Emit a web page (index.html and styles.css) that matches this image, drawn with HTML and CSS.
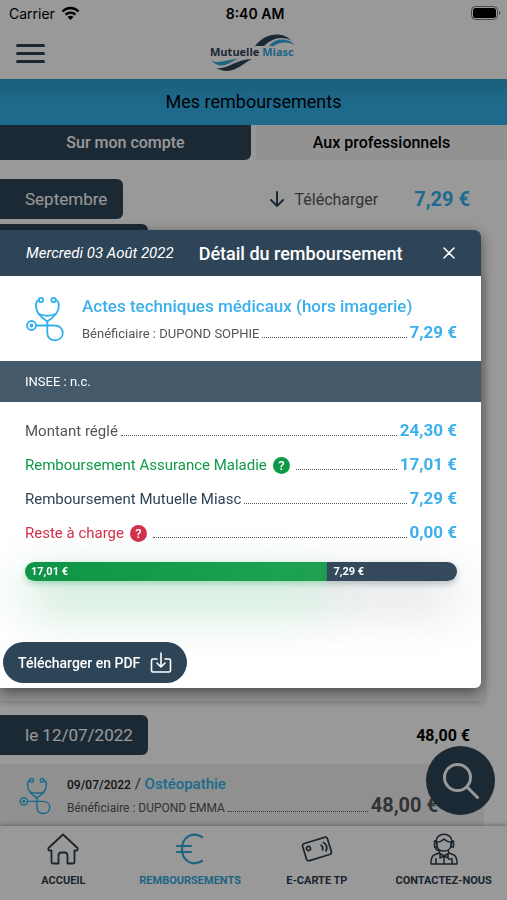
FILE: index.html
```html
<!DOCTYPE html>
<html lang="fr">
<head>
  <meta charset="UTF-8">
  <title>Mes remboursements</title>
  <meta name="viewport" content="width=device-width, initial-scale=1.0">
  <link rel="stylesheet" href="styles.css">
</head>
<body>
  <!-- shared stethoscope icon -->
  <svg class="sprite" aria-hidden="true">
    <symbol id="stethoscope" viewBox="0 0 38 46">
      <g fill="none" stroke="currentColor" stroke-width="1.8" stroke-linecap="round" stroke-linejoin="round">
        <circle cx="15" cy="4" r="2.200"/>
        <circle cx="27.500" cy="4" r="2.200"/>
        <path d="M12.800 4C10 5 10 7 10 9c0 8 4 11 11.300 16.500C28.500 20 32.800 17 32.800 9c0-2 0-4-3.100-5"/>
        <path d="M13 18c5 2 12 2 16.500 0M21.300 25.500V37c0 10 15.500 9.500 15.500 0 0-4.500-3.500-7.500-8-7.500H10"/>
        <circle cx="5.500" cy="29.500" r="4.500"/>
        <circle cx="5.500" cy="29.500" r="1"/>
      </g>
    </symbol>
  </svg>

  <div class="app">
    <div class="statusbar">
      <span class="carrier">Carrier
        <svg width="19" height="15" viewBox="0 0 19 15" fill="none" stroke="#000" stroke-width="2.400">
          <path d="M1.500 5.500c4.500-4.600 11.500-4.600 16 0M4.600 8.700c2.800-2.800 7-2.800 9.800 0"/>
          <path d="M9.500 14 6.500 11c1.700-1.600 4.300-1.600 6 0z" fill="#000" stroke="none"/>
        </svg>
      </span>
      <span class="clock">8:40 AM</span>
      <svg class="battery" width="30" height="15" viewBox="0 0 30 15">
        <rect x=".5" y=".5" width="26" height="13" rx="4" fill="none" stroke="#777"/>
        <rect x="2" y="2" width="23" height="10" rx="2.500" fill="#000"/>
        <path d="M28 5v4c2-1 2-3 0-4z" fill="#777"/>
      </svg>
    </div>

    <header class="header">
      <button class="menu-btn" type="button" aria-label="Menu">
        <span></span><span></span><span></span>
      </button>
      <svg class="logo" width="90" height="38" viewBox="0 0 90 38" role="img" aria-label="Mutuelle Miasc">
        <path d="M46 12C55 0 72-4 83 7 73 1 62 5 55 12z" fill="#2e4558"/>
        <path d="M60 12c5-7 17-10 26-1-9-4-16-3-21 1z" fill="#32a8dc"/>
        <text x="1" y="22"><tspan fill="#2e4558">Mutuelle</tspan><tspan fill="#32a8dc"> Miasc</tspan></text>
        <path d="M2 26c8 5 15-1 27-1-7 2-17 13-27 1z" fill="#32a8dc"/>
        <path d="M7 34c13 2 19-9 36-9-10 4-19 18-36 9z" fill="#2e4558"/>
      </svg>
    </header>

    <h1 class="page-title">Mes remboursements</h1>

    <div class="tabs">
      <button class="tab active" type="button">Sur mon compte</button>
      <button class="tab" type="button">Aux professionnels</button>
    </div>

    <main class="list">
      <div class="row">
        <span class="tag">Septembre</span>
        <a class="download" href="#">
          <svg width="16" height="18" viewBox="0 0 16 18" fill="none" stroke="#2e4558" stroke-width="2" stroke-linecap="round" stroke-linejoin="round"><path d="M8 2v14M2 10l6 6 6-6"/></svg>
          Télécharger
        </a>
        <span class="month-total">7,29 €</span>
      </div>
      <div class="group">
        <span class="tag tag-wide"></span>
        <div class="card card-fill"></div>
      </div>
      <div class="row row-day">
        <span class="tag tag-wide">le 12/07/2022</span>
        <span class="day-total">48,00 €</span>
      </div>
      <div class="card card-care">
        <svg class="care-icon" width="32" height="38"><use href="#stethoscope"/></svg>
        <div class="care">
          <div class="care-name"><b>09/07/2022</b> / <span>Ostéopathie</span></div>
          <div class="line line-tiny">
            <span>Bénéficiaire : DUPOND EMMA</span>
            <i class="dots"></i>
            <b class="care-total">48,00 €</b>
          </div>
        </div>
      </div>
    </main>

    <button class="search-btn" type="button" aria-label="Rechercher">
      <svg width="36" height="36" viewBox="0 0 36 36" fill="none" stroke="#fff" stroke-width="3" stroke-linecap="round"><circle cx="14.500" cy="14.500" r="13"/><path d="m24 24 10.500 10.500"/></svg>
    </button>

    <nav class="nav">
      <a href="#">
        <svg width="32" height="32" viewBox="0 0 32 32" fill="none" stroke="currentColor" stroke-width="1.800" stroke-linejoin="round"><path d="M16 1.500 1.500 15c-.7 2 .5 3 3 2.500V29c0 1 .5 1.500 1.500 1.500h5.500v-8c0-2 1-3 3-3h3c2 0 3 1 3 3v8H26c1 0 1.500-.5 1.500-1.500V17.500c2.500.5 3.700-.5 3-2.500z"/></svg>
        Accueil
      </a>
      <a class="current" href="#">
        <svg width="32" height="32" viewBox="0 0 32 32" fill="none" stroke="currentColor" stroke-width="2.200" stroke-linecap="round"><path d="M28 4C17-2 8 5 8 16s9 18 20 12M3 13h14M3 19h14"/></svg>
        Remboursements
      </a>
      <a href="#">
        <svg width="32" height="32" viewBox="0 0 32 32" fill="none" stroke="currentColor" stroke-width="1.700" stroke-linecap="round"><g transform="rotate(-17 16 16)"><rect x="3" y="7" width="26" height="18" rx="2.500"/><circle cx="8" cy="13" r="2"/><path d="M21 13.500q2 2.500 0 5M24 11.500q4 4.500 0 9"/></g></svg>
        E-Carte TP
      </a>
      <a href="#">
        <svg width="32" height="32" viewBox="0 0 32 32" fill="none" stroke="currentColor" stroke-width="1.500" stroke-linejoin="round"><path d="M8 9C8-1.500 24-1.500 24 9M9 9c4 0 6-2 7-3 1 1 3 3 7 3v3c0 8-14 8-14 0zM8 8H6.500v6H9zM24 8h1.500v6H23zM7 14c1 3 3 4 6 4M12 17l-1 3-5 2c-2 1-3 3-3 9h26c0-6-1-8-3-9l-5-2-1-3M11 20l5 3 5-3M12 20v5l4-2 4 2v-5M16 23v8M8 25v6M24 25v6M20 26h3"/></svg>
        Contactez-nous
      </a>
    </nav>
  </div>

  <div class="overlay">
    <section class="modal" role="dialog" aria-labelledby="modal-title">
      <header class="modal-header">
        <em>Mercredi 03 Août 2022</em>
        <h2 id="modal-title">Détail du remboursement</h2>
        <button class="close-btn" type="button" aria-label="Fermer">
          <svg width="12" height="12" viewBox="0 0 12 12" stroke="#fff" stroke-width="1.500" stroke-linecap="round"><path d="m1 1 10 10M11 1 1 11"/></svg>
        </button>
      </header>

      <div class="act">
        <svg class="act-icon" width="38" height="46"><use href="#stethoscope"/></svg>
        <div class="care">
          <h3>Actes techniques médicaux (hors imagerie)</h3>
          <div class="line line-small">
            <span>Bénéficiaire : DUPOND SOPHIE</span>
            <i class="dots"></i>
            <b>7,29 €</b>
          </div>
        </div>
      </div>

      <div class="insee">INSEE : n.c.</div>

      <div class="details">
        <div class="line">
          <span>Montant réglé</span><i class="dots"></i><b>24,30 €</b>
        </div>
        <div class="line green">
          <span>Remboursement Assurance Maladie</span>
          <button class="help" type="button">?</button>
          <i class="dots"></i><b>17,01 €</b>
        </div>
        <div class="line navy">
          <span>Remboursement Mutuelle Miasc</span><i class="dots"></i><b>7,29 €</b>
        </div>
        <div class="line red">
          <span>Reste à charge</span>
          <button class="help" type="button">?</button>
          <i class="dots"></i><b>0,00 €</b>
        </div>

        <div class="bar">
          <span class="bar-secu" style="width: 70%">17,01 €</span>
          <span class="bar-mutuelle" style="width: 30%">7,29 €</span>
        </div>
      </div>

      <button class="pdf-btn" type="button">
        Télécharger en PDF
        <svg width="22" height="22" viewBox="0 0 22 22" fill="none" stroke="#fff" stroke-width="1.600" stroke-linecap="round" stroke-linejoin="round"><path d="M7 7H3Q1.500 7 1.500 8.500v10Q1.500 20 3 20h16q1.500 0 1.500-1.500v-10Q20.500 7 19 7h-4M11 1v14M7 11l4 4 4-4"/></svg>
      </button>
    </section>
  </div>
</body>
</html>
```

FILE: styles.css
```css
* {
  box-sizing: border-box;
}
body {
  margin: 0;
  font-family: Roboto, Arial, sans-serif;
  color: #000;
  background: #fff;
}
h1, h2, h3 {
  margin: 0;
  font-weight: 500;
}
button {
  font-family: inherit;
  border: none;
  padding: 0;
  cursor: pointer;
}
a {
  color: inherit;
  text-decoration: none;
}
svg {
  flex: none;
}
.sprite {
  display: none;
}
.app {
  display: flex;
  flex-direction: column;
  min-height: 100vh;
}

/* top of the screen */
.statusbar {
  display: grid;
  grid-template-columns: 1fr auto 1fr;
  align-items: center;
  height: 27px;
  padding: 0 6px 0 9px;
  font-family: Inter, Arial, sans-serif;
  font-size: 14px;
}
.carrier {
  display: flex;
  align-items: center;
  gap: 6px;
}
.clock {
  font-weight: 600;
}
.battery {
  justify-self: end;
}
.header {
  display: grid;
  grid-template-columns: 1fr auto 1fr;
  align-items: center;
  height: 52px;
  padding: 0 16px;
}
.menu-btn {
  display: flex;
  flex-direction: column;
  gap: 5px;
  width: 29px;
  background: none;
}
.menu-btn span {
  height: 3px;
  width: 100%;
  border-radius: 2px;
  background: #2e4558;
}
.logo text {
  font-family: "Open Sans", sans-serif;
  font-size: 11px;
  font-weight: 700;
}
.page-title {
  height: 46px;
  line-height: 46px;
  text-align: center;
  font-size: 18px;
  font-weight: 400;
  background: linear-gradient(#2e9fce, #32b1ec 60%);
}
.tabs {
  display: flex;
  gap: 5px;
}
.tab {
  flex: 1;
  height: 35px;
  font-size: 16px;
  font-weight: 500;
  color: #000;
  background: #f4f4f6;
}
.tab.active {
  color: #fff;
  background: #2e4558;
  border-radius: 0 0 6px 0;
}

/* refunds list */
.list {
  flex: 1;
  display: flex;
  flex-direction: column;
  padding-top: 19px;
}
.row {
  display: flex;
  align-items: center;
  padding-right: 37px;
}
.tag {
  display: block;
  width: 123px;
  height: 40px;
  padding-left: 25px;
  line-height: 40px;
  font-size: 17px;
  color: #fff;
  background: #2e4558;
  border-radius: 0 6px 6px 0;
}
.tag-wide {
  width: 148px;
}
.download {
  display: flex;
  align-items: center;
  gap: 10px;
  margin-left: auto;
  margin-right: 36px;
  font-size: 16px;
  color: #555;
}
.month-total {
  font-size: 20px;
  font-weight: 700;
  color: #32b1ec;
}
.group {
  flex: 1;
  display: flex;
  flex-direction: column;
  gap: 10px;
  padding: 5px 0 14px;
}
.row-day {
  justify-content: space-between;
}
.day-total {
  font-size: 16px;
  font-weight: 700;
}
.card {
  margin-right: 23px;
  background: #f0f0f0;
}
.card-fill {
  flex: 1;
  box-shadow: 0 2px 6px rgba(0, 0, 0, 0.2);
}
.card-care {
  display: flex;
  align-items: center;
  gap: 16px;
  height: 62px;
  margin-top: 9px;
  padding: 2px 46px 0 19px;
}
.care {
  flex: 1;
}
.care-icon,
.act-icon {
  color: #32b1ec;
}
.care-name {
  font-size: 15px;
  color: #444;
}
.care-name b {
  font-size: 12px;
  font-weight: 500;
  color: #222;
}
.care-name span {
  font-weight: 500;
  color: #32b1ec;
}

/* label ....... amount */
.line {
  display: flex;
  align-items: baseline;
  gap: 3px;
  font-size: 15px;
  color: #555;
}
.line b {
  font-size: 17px;
  font-weight: 700;
  color: #3bb0ec;
}
.line .care-total {
  font-size: 20px;
  color: #555;
}
.line-small {
  font-size: 13px;
}
.line-tiny {
  font-size: 12px;
}
.dots {
  flex: 1;
  border-bottom: 1px dotted #555;
}
.line.green {
  color: #0f9a48;
}
.line.navy {
  color: #2e4558;
}
.line.red {
  color: #d4304c;
}
.help {
  width: 17px;
  height: 17px;
  margin: 0 3px;
  border-radius: 50%;
  font-size: 13px;
  font-weight: 500;
  line-height: 17px;
  color: #fff;
}
.green .help {
  background: #0f9a48;
}
.red .help {
  background: #d4304c;
}

.search-btn {
  position: fixed;
  right: 12px;
  bottom: 85px;
  display: flex;
  align-items: center;
  justify-content: center;
  width: 69px;
  height: 69px;
  border-radius: 50%;
  background: #2e4558;
}
.nav {
  display: flex;
  height: 74px;
  padding-top: 7px;
  background: #fff;
  box-shadow: 0 -1px 4px rgba(0, 0, 0, 0.3);
}
.nav a {
  flex: 1;
  display: flex;
  flex-direction: column;
  align-items: center;
  gap: 9px;
  font-size: 11px;
  font-weight: 700;
  text-transform: uppercase;
  color: #2e3d4a;
}
.nav .current {
  color: #32a8dc;
}

/* refund detail */
.overlay {
  position: fixed;
  inset: 0;
  padding: 230px 26px 212px 0;
  background: rgba(0, 0, 0, 0.4);
}
.modal {
  display: flex;
  flex-direction: column;
  height: 100%;
  overflow: hidden;
  background: #fff;
  border-radius: 0 6px 6px 0;
  box-shadow: 0 4px 14px rgba(0, 0, 0, 0.5);
}
.modal-header {
  display: flex;
  align-items: center;
  gap: 25px;
  height: 46px;
  padding: 0 26px;
  color: #fff;
  background: #2e4558;
}
.modal-header em {
  font-size: 15px;
}
.modal-header h2 {
  font-size: 18px;
}
.close-btn {
  display: flex;
  margin-left: auto;
  background: none;
}
.act {
  display: flex;
  align-items: center;
  gap: 18px;
  height: 85px;
  padding: 0 24px 0 26px;
}
.act h3 {
  margin-bottom: 6px;
  font-size: 17px;
  color: #3bb0ec;
}
.insee {
  height: 41px;
  padding-left: 25px;
  line-height: 41px;
  font-size: 13px;
  color: #fff;
  background: #445a6a;
}
.details {
  display: flex;
  flex-direction: column;
  gap: 14px;
  padding: 18px 24px 0 25px;
}
.bar {
  display: flex;
  height: 19px;
  margin-top: 6px;
  line-height: 19px;
  font-size: 11px;
  font-weight: 700;
  color: #fff;
}
.bar span {
  padding-left: 6px;
}
.bar-secu {
  border-radius: 10px 0 0 10px;
  background: linear-gradient(90deg, #0f9447, #1fa452);
  box-shadow: 0 3px 6px rgba(15, 148, 71, 0.3), 0 22px 50px rgba(15, 148, 71, 0.45);
}
.bar-mutuelle {
  border-radius: 0 10px 10px 0;
  background: #34495c;
  box-shadow: 0 3px 6px rgba(46, 69, 88, 0.3), 0 22px 50px rgba(46, 69, 88, 0.3);
}
.pdf-btn {
  display: flex;
  align-items: center;
  align-self: flex-start;
  gap: 10px;
  height: 41px;
  margin: auto 0 5px 3px;
  padding: 0 15px;
  border-radius: 21px;
  font-size: 14px;
  font-weight: 500;
  color: #fff;
  background: #2e4558;
  z-index: 1;
}
```
